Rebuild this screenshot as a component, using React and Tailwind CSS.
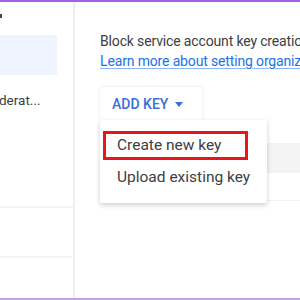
export default function App() {
  return (
    <div className="w-[300px] h-[300px] bg-white overflow-hidden relative flex flex-col" style={{ fontFamily: "Roboto, 'Liberation Sans', sans-serif" }}>
      <div className="h-[2px] bg-[#a461e6] shrink-0" />
      <div className="flex flex-1 min-h-0">
        {/* left panel */}
        <div className="w-[75px] shrink-0 border-r-2 border-[#f0f0f0] flex flex-col">
          <div className="h-[12px] shrink-0" />
          <div className="h-[4px] w-[2px] bg-[#444] shrink-0" />
          <div className="h-[17px] shrink-0" />
          <div className="w-[57px] h-[40px] bg-[#eef3fd] shrink-0" />
          <div className="h-[16px] shrink-0" />
          <div className="text-[13.5px] leading-[18px] text-[#3c4043] whitespace-nowrap -ml-[1px]">derat...</div>
          <div className="h-[99px] shrink-0 border-b-2 border-[#f3f3f3]" />
          <div className="h-[50px] shrink-0 border-b-2 border-[#f5f5f5]" />
        </div>
        {/* right panel */}
        <div className="flex-1 min-w-0 flex flex-col pl-[25px] overflow-hidden">
          <div className="h-[29px] shrink-0" />
          <div className="text-[14px] tracking-[-0.15px] leading-[20px] text-[#3c4043] whitespace-nowrap">Block service account key creation</div>
          <div className="text-[14px] tracking-[-0.15px] leading-[20px] text-[#1a73e8] underline underline-offset-2 decoration-[#8ab4f8] whitespace-nowrap">Learn more about setting organization policies</div>
          <div className="h-[16px] shrink-0" />
          <div className="w-[102px] h-[34px] shrink-0 bg-white rounded-[3px] shadow-[0_0_3px_rgba(0,0,0,0.12)] flex items-center pl-[12px] gap-[7px]">
            <span className="text-[14px] font-medium text-[#3a6fd8] tracking-[0px]">ADD KEY</span>
            <svg width="8" height="5" viewBox="0 0 8 5"><path d="M0 0 L8 0 L4 5 Z" fill="#3a6fd8" /></svg>
          </div>
          <div className="h-[22px] shrink-0" />
          <div className="h-[30px] -mr-[5px] bg-[#f3f3f3] shrink-0" />
          <div className="h-[28px] shrink-0 border-b border-[#f3f3f3]" />
        </div>
      </div>
      <div className="h-[2px] bg-[#bba4ea] shrink-0" />

      {/* dropdown menu */}
      <div className="absolute left-[100px] top-[120px] w-[167px] h-[83px] bg-white shadow-[0_2px_5px_rgba(0,0,0,0.2)] rounded-[2px] flex flex-col pt-[11px]">
        <div className="ml-[3px] w-[145px] h-[29px] border-[3px] border-[#e8161b] flex items-center pl-[11px]">
          <span className="text-[15.5px] text-[#3c4043] whitespace-nowrap">Create new key</span>
        </div>
        <div className="h-[34px] flex items-center pl-[17px] mt-[1px]">
          <span className="text-[15.5px] text-[#3c4043] whitespace-nowrap">Upload existing key</span>
        </div>
      </div>
    </div>
  );
}
